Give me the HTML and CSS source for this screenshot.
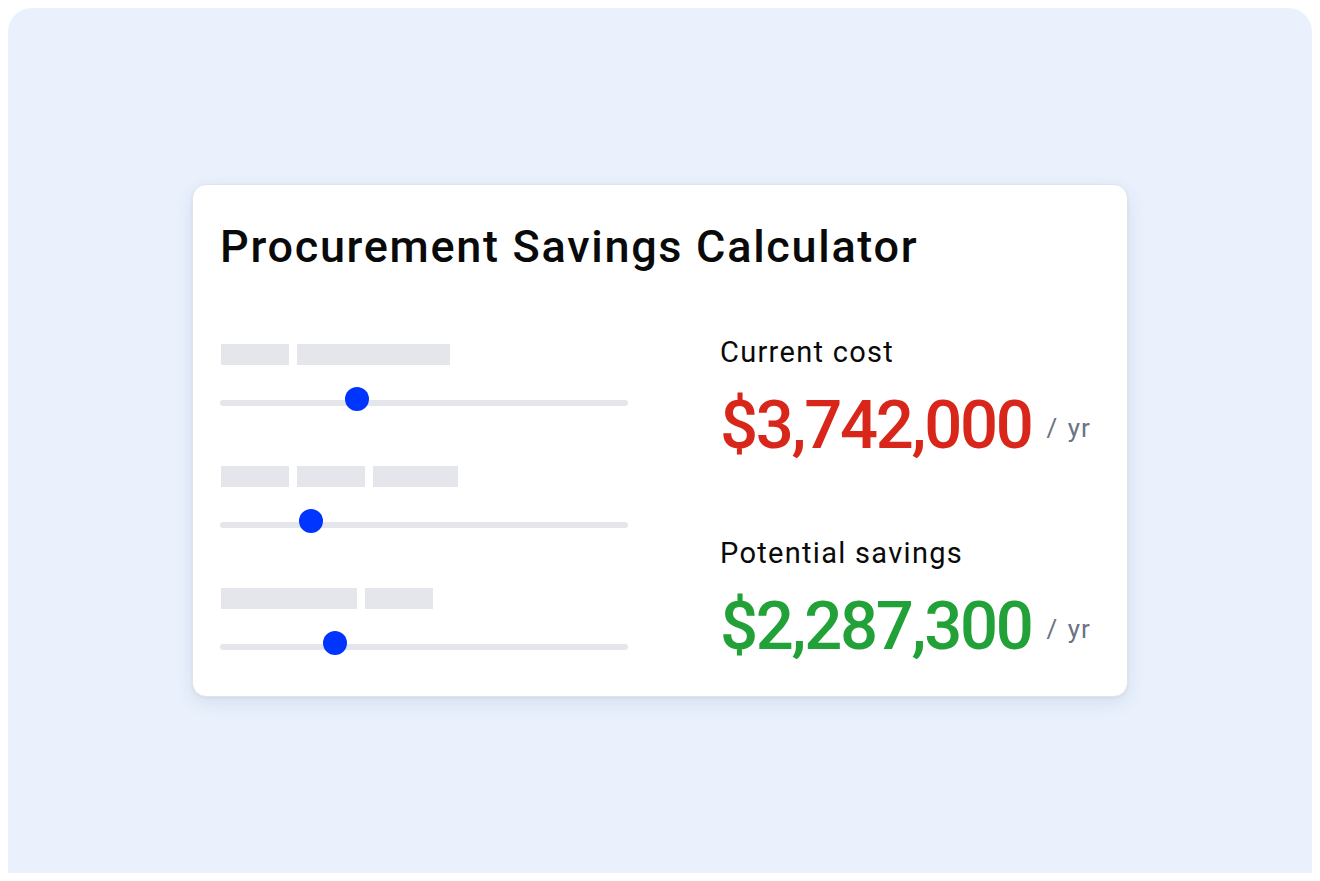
FILE: index.html
```html
<!DOCTYPE html>
<html lang="en">
<head>
<meta charset="utf-8">
<title>Procurement Savings Calculator</title>
<link rel="stylesheet" href="styles.css">
</head>
<body>
<main class="stage">
  <section class="card">
    <h1 class="title">Procurement Savings Calculator</h1>
    <div class="layout">
      <div class="controls">
        <div class="control">
          <div class="label-row"><span class="sk w68"></span><span class="sk w153"></span></div>
          <div class="slider"><div class="track"></div><div class="thumb" style="left:33.6%"></div></div>
        </div>
        <div class="control">
          <div class="label-row"><span class="sk w68"></span><span class="sk w68"></span><span class="sk w85"></span></div>
          <div class="slider"><div class="track"></div><div class="thumb" style="left:22.2%"></div></div>
        </div>
        <div class="control">
          <div class="label-row"><span class="sk w136"></span><span class="sk w68"></span></div>
          <div class="slider"><div class="track"></div><div class="thumb" style="left:28.2%"></div></div>
        </div>
      </div>
      <div class="results">
        <div class="result">
          <div class="result-label">Current cost</div>
          <div class="result-value"><span class="amount cost">$3,742,000</span><span class="unit">/ yr</span></div>
        </div>
        <div class="result">
          <div class="result-label">Potential savings</div>
          <div class="result-value"><span class="amount savings">$2,287,300</span><span class="unit">/ yr</span></div>
        </div>
      </div>
    </div>
  </section>
</main>
</body>
</html>
```
FILE: styles.css
```css
* { box-sizing: border-box; }
html, body { margin: 0; padding: 0; background: #ffffff; }
body { padding: 8px; font-family: "Roboto", "Liberation Sans", sans-serif; color: #0b0b0c; }

.stage {
  height: 865px;
  background: #eaf1fd;
  border-radius: 24px 24px 0 0;
  display: flex;
  align-items: center;
  justify-content: center;
}

.card {
  width: 936px;
  background: #ffffff;
  border: 1px solid #dfe4ec;
  border-radius: 14px;
  box-shadow: 0 6px 18px rgba(40, 60, 110, 0.10), 0 1px 3px rgba(40, 60, 110, 0.06);
  padding: 35px 27px 30px 27px;
}

.title {
  margin: 0;
  font-size: 45px;
  line-height: 53px;
  font-weight: 500;
  letter-spacing: 1.7px;
  color: #0a0a0a;
  white-space: nowrap;
}

.layout {
  margin-top: 61px;
  display: grid;
  grid-template-columns: 408px 1fr;
  column-gap: 92px;
  align-items: start;
}

.controls { display: flex; flex-direction: column; gap: 60px; margin-top: 10px; }

.control { display: flex; flex-direction: column; gap: 35px; }

.label-row { display: flex; gap: 8px; padding-left: 1px; }
.sk { display: block; height: 21px; background: #e5e6eb; }
.w68 { width: 68px; }
.w85 { width: 85px; }
.w136 { width: 136px; }
.w153 { width: 153px; }

.slider { position: relative; height: 6px; }
.track { height: 6px; border-radius: 3px; background: #e5e6eb; }
.thumb {
  position: absolute;
  top: -13px;
  width: 24px;
  height: 24px;
  margin-left: -12px;
  border-radius: 50%;
  background: #0034ff;
}

.results { display: flex; flex-direction: column; gap: 70px; }
.result { display: flex; flex-direction: column; gap: 15px; }

.result-label {
  font-size: 29px;
  line-height: 36px;
  font-weight: 400;
  letter-spacing: 1.3px;
  color: #0a0a0a;
  white-space: nowrap;
}

.result-value { display: flex; align-items: flex-start; gap: 15px; white-space: nowrap; }

.amount {
  font-size: 67px;
  line-height: 80px;
  font-weight: 500;
  letter-spacing: -2.3px;
}
.cost { color: #d8271a; }
.savings { color: #22a138; }

.unit {
  font-size: 26px;
  line-height: 30px;
  margin-top: 28px;
  letter-spacing: 1px;
  word-spacing: 2px;
  color: #6b7383;
}
```
